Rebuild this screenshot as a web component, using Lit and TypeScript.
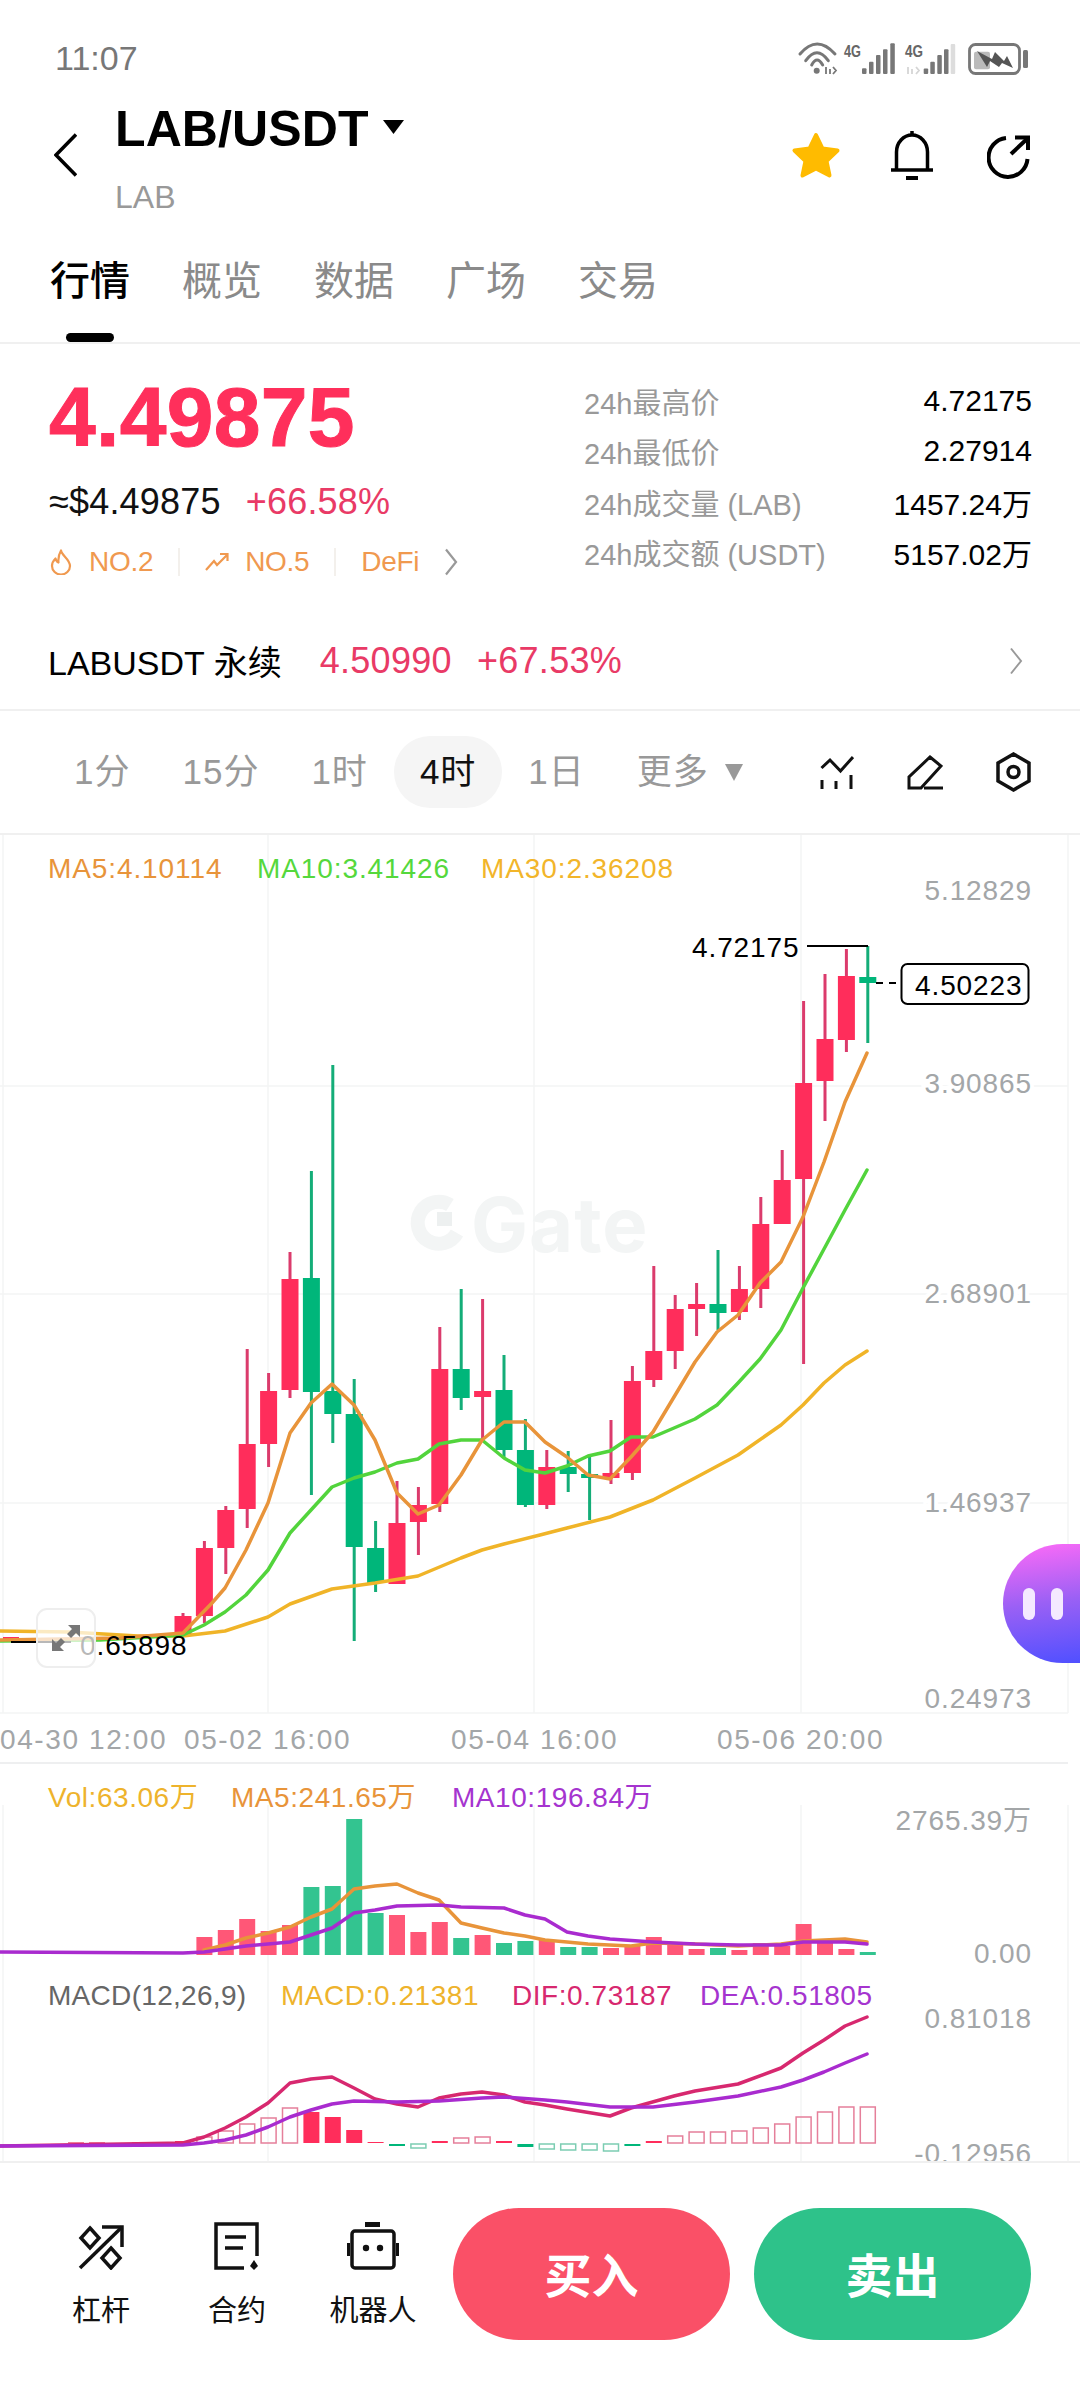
import { LitElement, html, css, svg } from "lit";
import { customElement } from "lit/decorators.js";

type Pt = [number, number];
const RED = "#FF2D5B", GREEN = "#00B67A", WRED = "#DB3B6C", WGREEN = "#14AD78";
const xAt = (i: number) => 183 + 21.4 * i;

// up(1)/down(0), wickTop, bodyTop, bodyBottom, wickBottom
const CANDLES: number[][] = [
  [1,1613,1616,1635,1635],[1,1541,1548,1616,1623],[1,1506,1510,1548,1574],[1,1349,1444,1509,1528],
  [1,1373,1391,1444,1467],[1,1252,1279,1390,1398],[0,1171,1278,1392,1495],[0,1065,1391,1414,1443],
  [0,1379,1414,1547,1641],[0,1521,1548,1583,1592],[1,1481,1523,1584,1584],[1,1487,1505,1522,1555],
  [1,1327,1369,1504,1512],[0,1289,1369,1398,1410],[1,1299,1391,1397,1440],[0,1355,1390,1450,1457],
  [0,1419,1450,1505,1507],[1,1450,1467,1505,1509],[0,1451,1467,1474,1492],[0,1457,1474,1478,1520],
  [1,1420,1473,1478,1484],[1,1366,1381,1473,1480],[1,1266,1351,1380,1387],[1,1295,1309,1351,1369],
  [1,1283,1304,1309,1336],[0,1250,1304,1313,1330],[1,1266,1289,1312,1320],[1,1197,1224,1289,1308],
  [1,1150,1180,1224,1224],[1,1001,1083,1179,1364],[1,974,1039,1081,1121],[1,949,976,1040,1052],
  [0,946,977,983,1043],
];

const MA5: Pt[] = [[0,1640],[120,1638],[183,1633],[212,1603],[225,1588],[246,1550],[268,1503],[290,1433],[311,1403],[332,1384],[354,1405],[375,1440],[397,1493],[418,1514],[439,1505],[461,1475],[482,1440],[504,1422],[525,1422],[545,1442],[567,1457],[588,1475],[610,1479],[631,1457],[653,1432],[674,1397],[695,1362],[717,1332],[738,1315],[760,1283],[781,1262],[803,1217],[824,1162],[845,1102],[867,1053]];
const MA10: Pt[] = [[0,1641],[100,1640],[183,1635],[204,1625],[225,1612],[246,1595],[268,1570],[290,1533],[311,1510],[332,1487],[354,1478],[375,1472],[397,1463],[418,1459],[439,1444],[461,1440],[482,1440],[504,1458],[525,1470],[545,1473],[567,1466],[588,1456],[610,1451],[631,1437],[653,1437],[674,1428],[695,1419],[717,1405],[738,1383],[760,1359],[781,1330],[803,1288],[824,1249],[845,1210],[867,1170]];
const MA30: Pt[] = [[0,1631],[69,1632],[138,1636],[183,1636],[225,1631],[268,1617],[290,1604],[332,1589],[375,1583],[418,1576],[461,1558],[482,1550],[504,1544],[540,1535],[567,1528],[610,1517],[653,1500],[695,1478],[738,1455],[781,1425],[803,1405],[824,1383],[845,1365],[867,1351]];

// up(1)/down(0), top
const VOL: number[][] = [[1,1937],[1,1930],[1,1919],[1,1931],[1,1925],[0,1887],[0,1886],[0,1819],[0,1913],[1,1915],[1,1932],[1,1922],[0,1938],[1,1935],[0,1943],[0,1941],[1,1940],[0,1947],[0,1947],[1,1948],[1,1946],[1,1937],[1,1945],[1,1949],[0,1948],[1,1950],[1,1943],[1,1946],[1,1924],[1,1943],[1,1949],[0,1952]];
const VOL_MA5: Pt[] = [[204,1950],[225,1945],[246,1938],[268,1933],[290,1927],[311,1917],[332,1909],[354,1889],[375,1886],[397,1884],[418,1893],[439,1900],[461,1923],[482,1928],[504,1933],[525,1936],[545,1940],[567,1942],[588,1944],[631,1946],[653,1943],[695,1944],[738,1946],[781,1944],[803,1941],[845,1939],[867,1942]];
const VOL_MA10: Pt[] = [[0,1952],[183,1953],[204,1952],[225,1949],[246,1946],[268,1944],[290,1942],[311,1935],[332,1928],[354,1913],[375,1910],[397,1906],[439,1905],[461,1907],[504,1908],[525,1915],[545,1919],[567,1932],[588,1936],[610,1939],[653,1942],[695,1944],[738,1945],[781,1945],[803,1942],[845,1942],[867,1944]];

// index, top, bottom, colour (r/g), solid(1)/hollow(0)
const HIST: [number, number, number, string, number][] = [
  [0,2141,2143,"r",1],[1,2137,2143,"r",0],[2,2131,2143,"r",0],[3,2124,2143,"r",0],[4,2118,2143,"r",0],[5,2108,2143,"r",0],
  [6,2112,2143,"r",1],[7,2117,2143,"r",1],[8,2130,2143,"r",1],[9,2142,2143,"r",1],[10,2144,2146,"g",1],[11,2144,2148,"g",0],
  [12,2141,2143,"r",1],[13,2138,2143,"r",0],[14,2137,2143,"r",0],[15,2141,2143,"r",1],[16,2144,2147,"g",1],[17,2144,2149,"g",0],
  [18,2144,2150,"g",0],[19,2144,2150,"g",0],[20,2144,2151,"g",0],[21,2144,2146,"g",1],[22,2141,2143,"r",1],[23,2136,2143,"r",0],
  [24,2132,2143,"r",0],[25,2132,2143,"r",0],[26,2131,2143,"r",0],[27,2128,2143,"r",0],[28,2124,2143,"r",0],[29,2117,2143,"r",0],
  [30,2112,2143,"r",0],[31,2107,2143,"r",0],[32,2107,2143,"r",0],
];
const DIF: Pt[] = [[0,2146],[183,2143],[204,2137],[225,2128],[246,2117],[268,2103],[290,2083],[311,2079],[332,2077],[354,2088],[375,2099],[397,2104],[418,2107],[439,2098],[461,2094],[482,2092],[504,2095],[525,2102],[545,2105],[567,2109],[610,2116],[631,2108],[674,2096],[695,2091],[738,2084],[781,2068],[803,2053],[824,2040],[845,2026],[867,2017]];
const DEA: Pt[] = [[0,2146],[183,2145],[204,2143],[225,2140],[246,2135],[268,2127],[290,2117],[311,2110],[332,2104],[354,2101],[397,2102],[439,2101],[482,2098],[504,2097],[545,2100],[567,2102],[610,2107],[653,2107],[695,2102],[738,2096],[781,2087],[803,2080],[824,2072],[845,2063],[867,2054]];

const pts = (p: Pt[]) => p.map((q) => q.join(",")).join(" ");

@customElement("app-root")
export class AppRoot extends LitElement {
  static styles = css`
    :host { display: block; width: 1080px; height: 2388px; background: #fff; overflow: hidden; position: relative;
      font-family: "Liberation Sans", "Noto Sans CJK SC", sans-serif; color: #111; }
    svg { display: block; flex: none; }
    .status { height: 84px; box-sizing: border-box; padding: 32px 50px 0 55px; display: flex; align-items: center; justify-content: space-between; }
    .time { font-size: 34px; color: #777; line-height: 52px; }
    .status svg { overflow: visible; }
    .header { height: 136px; box-sizing: border-box; display: flex; align-items: flex-start; padding: 20px 50px 0 54px; }
    .back { margin-top: 29px; margin-right: 38px; }
    .titles { flex: 1; }
    .title-row { display: flex; align-items: center; height: 50px; }
    .title { font-size: 50px; font-weight: 700; line-height: 50px; color: #000; letter-spacing: .1px; }
    .caret { margin-left: 14px; margin-top: -4px; }
    .sub { margin-top: 25px; font-size: 32px; line-height: 36px; color: #999; }
    .actions { display: flex; align-items: flex-start; margin-top: 27px; }
    .star { margin-right: 50px; }
    .bell { margin-right: 54px; }
    .share { margin-top: 4px; }
    .tabs { height: 124px; box-sizing: border-box; border-bottom: 2px solid #F0F0F0; display: flex; gap: 52px; padding: 41px 0 0 50px; }
    .tab { display: flex; flex-direction: column; align-items: center; font-size: 40px; line-height: 40px; color: #8A8A8A; }
    .tab.on { color: #000; font-weight: 500; }
    .tab i { width: 48px; height: 9px; border-radius: 5px; background: #000; margin-top: 32px; }
    .summary { height: 270px; display: flex; justify-content: space-between; padding: 31px 48px 0 49px; box-sizing: border-box; }
    .price { font-size: 84px; line-height: 84px; font-weight: 700; color: #FF2F5B; -webkit-text-stroke: 1px #FF2F5B; letter-spacing: .3px; }
    .fiat { display: flex; gap: 25px; font-size: 36px; line-height: 40px; margin-top: 23px; letter-spacing: .2px; }
    .fiat b { font-weight: 400; color: #E93A66; }
    .tags { display: flex; align-items: center; margin-top: 24px; font-size: 28px; line-height: 32px; color: #F0994F; letter-spacing: -.3px; }
    .tag-text { margin-left: 16px; }
    .tag-div { width: 2px; height: 28px; background: #F3F0EC; margin: 0 25px; }
    .tags svg.more { margin-left: 25px; }
    .stats { width: 448px; margin-top: 1px; }
    .stat { height: 50.33px; display: flex; align-items: center; justify-content: space-between; font-size: 30px; color: #000; }
    .stat span { color: #999; font-size: 29px; }
    .perp { height: 97px; box-sizing: border-box; border-bottom: 2px solid #F0F0F0; display: flex; align-items: center; padding: 0 57px 2px 48px; }
    .perp-name { font-size: 34px; color: #000; margin-right: 38px; }
    .perp-num { font-size: 36px; color: #E93A66; margin-right: 25px; letter-spacing: .3px; }
    .perp svg { margin-left: auto; }
    .periods { height: 124px; box-sizing: border-box; border-bottom: 2px solid #F0F0F0; display: flex; align-items: center; padding: 0 49px 0 48px; font-size: 35px; color: #999; letter-spacing: 1px; }
    .period { padding: 0 26px; height: 72px; line-height: 72px; border-radius: 36px; white-space: nowrap; display: flex; align-items: center; }
    .period.on { background: #F5F5F5; color: #111; }
    .period svg { margin-left: 16px; }
    .tools { display: flex; gap: 53px; margin-left: auto; align-items: center; }
    .chart { position: relative; height: 1326px; overflow: hidden; }
    .chart text { font-family: "Liberation Sans", "Noto Sans CJK SC", sans-serif; font-size: 28px; letter-spacing: .9px; dominant-baseline: central; }
    .chart text.tight { letter-spacing: .55px; }
    .chart text.paren { letter-spacing: .3px; }
    .axis { fill: #A3A6A8; paint-order: stroke; stroke: #fff; stroke-width: 8px; }
    .chart text.date { fill: #A3A6A8; letter-spacing: 1.6px; }
    .mark { fill: #000; }
    .chart text.wm { font-family: Inter, "Liberation Sans", sans-serif; font-weight: 700; font-size: 76px; fill: #F3F5F5; letter-spacing: 1px; }
    .float { position: absolute; right: 0; top: 709px; width: 77px; height: 119px; border-radius: 60px 0 0 60px;
      background: linear-gradient(172deg, #FF6BF7 0%, #9A60F5 50%, #5050FF 100%); display: flex; gap: 16px; align-items: center; padding-left: 20px; box-sizing: border-box; }
    .float i { width: 12px; height: 32px; border-radius: 6px; background: #F4E9FF; }
    .bottom { height: 227px; box-sizing: border-box; border-top: 2px solid #F0F0F0; display: flex; align-items: flex-start; padding: 45px 48px 0 33px; }
    .act { width: 136px; display: flex; flex-direction: column; align-items: center; font-size: 29px; color: #111; }
    .act div { height: 62px; display: flex; align-items: flex-end; }
    .act span { margin-top: 26px; line-height: 30px; white-space: nowrap; }
    .btn { width: 277px; height: 132px; box-sizing: border-box; padding-bottom: 4px; border-radius: 66px; display: flex; align-items: center; justify-content: center; color: #fff; font-size: 47px; font-weight: 700; }
    .buy { background: #FA5067; margin-left: 12px; }
    .sell { background: #2EC28A; margin-left: 24px; }
  `;

  private statusIcons() {
    const c = "#777";
    const bars = (xs: number[], tops: number[], fade: boolean) =>
      xs.map((x, i) => svg`<rect x=${x - 2} y=${tops[i]} width="4.5" height=${33 - tops[i]} rx="1" fill=${fade && i === 4 ? "#DDD" : c}></rect>`);
    return html`<svg width="232" height="34" viewBox="0 0 232 34">
      <g fill="none" stroke=${c} stroke-width="3" stroke-linecap="round">
        <path d="M2 13Q19 -7 37 13"></path><path d="M7.7 19.7Q19 3.7 30.3 19.7"></path><path d="M13.7 24Q19 14 24.7 24"></path>
      </g>
      <circle cx="18.7" cy="29.7" r="3" fill=${c}></circle>
      <path d="M28 26V33M32 28V33M35 26L38 29.500L35 33" fill="none" stroke=${c} stroke-width="1.800"></path>
      <text x="46" y="16" font-family="Liberation Sans" font-size="17" font-weight="700" fill="#666" textLength="17" lengthAdjust="spacingAndGlyphs">4G</text>
      ${bars([66, 73, 80, 87, 94.3], [27.3, 20.7, 14, 8.3, 2.3], false)}
      <text x="107" y="16" font-family="Liberation Sans" font-size="17" font-weight="700" fill="#666" textLength="18" lengthAdjust="spacingAndGlyphs">4G</text>
      <path d="M110 26V33M114 28V33M118 26L121 29.500L118 33" fill="none" stroke="#D5D5D5" stroke-width="1.800"></path>
      ${bars([127.7, 134.3, 141.3, 148, 154.7], [27.5, 20.7, 14, 8.3, 3], true)}
      <rect x="171.500" y="3.500" width="50" height="29" rx="6" fill="none" stroke=${c} stroke-width="2.800"></rect>
      <rect x="176" y="10.700" width="16" height="17.600" rx="2" fill="#BBB"></rect>
      <path d="M179 10L194 18L197 11L206 20L209 15L215 27L204 22L201 26L192 20L189 26Z" fill="#555"></path>
      <rect x="225" y="9" width="5" height="18" rx="1.500" fill=${c}></rect>
    </svg>`;
  }

  private chart() {
    const V = [268, 534, 801, 1068, 3];
    const H = [1086, 1294, 1503];
    const label = (t: string, x: number, y: number, c: string, cls = "") =>
      svg`<text class=${cls} x=${x} y=${y} fill=${c}>${t}</text>`;
    const axis = (t: string, y: number) =>
      svg`<text class="axis" x="1032" y=${y} text-anchor="end">${t}</text>`;
    const line = (p: Pt[], c: string, w = 3.5) =>
      svg`<polyline points=${pts(p)} fill="none" stroke=${c} stroke-width=${w} stroke-linejoin="round" stroke-linecap="round"></polyline>`;
    return html`<svg width="1080" height="1326" viewBox="0 835 1080 1326">
      <g stroke="#F3F4F5" stroke-width="1.500">
        ${V.map((x) => svg`<line x1=${x} x2=${x} y1="835" y2="1713"></line><line x1=${x} x2=${x} y1="1805" y2="2161"></line>`)}
        ${H.map((y) => svg`<line x1="0" x2="1068" y1=${y} y2=${y}></line>`)}
        <line x1="0" x2="1068" y1="1713" y2="1713"></line>
      </g>
      <line x1="0" x2="1068" y1="1763" y2="1763" stroke="#EEEFF0" stroke-width="2"></line>

      <path d="M450 1205A21 21 0 1 0 457 1233" fill="none" stroke="#F3F5F5" stroke-width="14"></path>
      <rect x="437" y="1212" width="15" height="14" fill="#EDF0F0"></rect>
      <text class="wm" x="471" y="1224">Gate</text>

      ${label("MA5:4.10114", 48, 868, "#E8943A")}
      ${label("MA10:3.41426", 257, 868, "#55D83C")}
      ${label("MA30:2.36208", 481, 868, "#F2B52A")}
      ${axis("5.12829", 890)}${axis("3.90865", 1083)}${axis("2.68901", 1293)}${axis("1.46937", 1502)}${axis("0.24973", 1698)}

      <rect x="3" y="1637" width="16" height="3" fill=${RED}></rect>
      <rect x="29" y="1638" width="12" height="3" fill=${GREEN}></rect>
      ${CANDLES.map((c, i) => {
        const x = xAt(i);
        return svg`<rect x=${x - 1.5} y=${c[1]} width="3" height=${c[4] - c[1]} fill=${c[0] ? WRED : WGREEN}></rect>
          <rect x=${x - 8.5} y=${c[2]} width="17" height=${c[3] - c[2]} fill=${c[0] ? RED : GREEN}></rect>`;
      })}
      ${line(MA30, "#F0B428")}${line(MA10, "#52D43C")}${line(MA5, "#E8943A")}

      <text class="mark" x="692" y="947">4.72175</text>
      <path d="M807 946H868" stroke="#000" stroke-width="2" fill="none"></path>
      <path d="M876 983H900" stroke="#000" stroke-width="2" stroke-dasharray="7 6" fill="none"></path>
      <rect x="901.500" y="964" width="127" height="40" rx="6" fill="#fff" stroke="#000" stroke-width="2"></rect>
      <text class="mark" x="915" y="985">4.50223</text>

      <path d="M11 1642H71" stroke="#000" stroke-width="2"></path>
      <text class="mark" x="80" y="1645">0.65898</text>
      <rect x="37" y="1609" width="58" height="58" rx="10" fill="#fff" fill-opacity=".72" stroke="#EEE" stroke-width="2"></rect>
      <path d="M68 1625H80V1637L76 1633L71 1638L67 1634L72 1629Z M52 1651V1639L56 1643L61 1638L65 1642L60 1647L64 1651Z" fill="#777"></path>

      <text class="date" x="0" y="1739">04-30 12:00</text>
      <text class="date" x="184" y="1739">05-02 16:00</text>
      <text class="date" x="451" y="1739">05-04 16:00</text>
      <text class="date" x="717" y="1739">05-06 20:00</text>

      ${label("Vol:63.06万", 48, 1797, "#EEB32C", "tight")}
      ${label("MA5:241.65万", 231, 1797, "#E8943A", "tight")}
      ${label("MA10:196.84万", 452, 1797, "#A534CF", "tight")}
      ${axis("2765.39万", 1820)}${axis("0.00", 1953)}
      ${VOL.map((v, i) => svg`<rect x=${xAt(i + 1) - 8} y=${v[1]} width="16" height=${1955 - v[1]} fill=${v[0] ? "#FF5777" : "#33C490"}></rect>`)}
      ${line(VOL_MA5, "#E8943A")}${line(VOL_MA10, "#A92BCF")}

      ${label("MACD(12,26,9)", 48, 1995, "#666", "paren")}
      ${label("MACD:0.21381", 281, 1995, "#EEB32C", "tight")}
      ${label("DIF:0.73187", 512, 1995, "#D7286F", "tight")}
      ${label("DEA:0.51805", 700, 1995, "#A534CF", "tight")}
      ${axis("0.81018", 2018)}${axis("-0.12956", 2153)}
      ${[76, 97, 140, 161].map((x) => svg`<rect x=${x - 8} y="2142" width="16" height="1.500" fill="#F27C98"></rect>`)}
      ${HIST.map((h) => {
        const x = xAt(h[0]);
        const col = h[3] === "r" ? (h[4] ? RED : "#E57F9A") : h[4] ? GREEN : "#7CCDB2";
        return h[4]
          ? svg`<rect x=${x - 8} y=${h[1]} width="16" height=${h[2] - h[1]} fill=${col}></rect>`
          : svg`<rect x=${x - 7.5} y=${h[1]} width="15" height=${h[2] - h[1]} fill="none" stroke=${col} stroke-width="1.500"></rect>`;
      })}
      ${line(DIF, "#D7286F")}${line(DEA, "#A92BCF")}
    </svg>`;
  }

  render() {
    return html`
      <div class="status"><span class="time">11:07</span>${this.statusIcons()}</div>

      <div class="header">
        <svg class="back" width="23" height="44" viewBox="0 0 23 44"><path d="M22 1.500L2 22L22 42.500" fill="none" stroke="#000" stroke-width="3.500"></path></svg>
        <div class="titles">
          <div class="title-row"><span class="title">LAB/USDT</span>
            <svg class="caret" width="21" height="14" viewBox="0 0 21 14"><path d="M0 0H21L10.500 14Z" fill="#000"></path></svg></div>
          <div class="sub">LAB</div>
        </div>
        <div class="actions">
          <svg class="star" width="50" height="48" viewBox="0 0 50 48"><path d="M25 4L31.500 17.500L46.500 19.500L35.500 30L38.500 44.500L25 37.500L11.500 44.500L14.500 30L3.500 19.500L18.500 17.500Z" fill="#FFBB00" stroke="#FFBB00" stroke-width="4" stroke-linejoin="round"></path></svg>
          <svg class="bell" width="42" height="49" viewBox="0 0 42 49"><g fill="none" stroke="#000" stroke-width="3.500"><path d="M21 0V4"></path><path d="M5.500 39V21A15.500 17 0 0 1 36.500 21V39"></path><path d="M0 39H42"></path></g><rect x="15" y="45" width="12" height="4" fill="#000"></rect></svg>
          <svg class="share" width="43" height="44" viewBox="0 0 43 44"><g fill="none" stroke="#000" stroke-width="4"><path d="M19 3A19.500 19.500 0 1 0 40.500 24"></path><path d="M24 19L41 3"></path><path d="M28 2.500H41V15"></path></g></svg>
        </div>
      </div>

      <div class="tabs">
        <div class="tab on">行情<i></i></div>
        <div class="tab">概览</div><div class="tab">数据</div><div class="tab">广场</div><div class="tab">交易</div>
      </div>

      <div class="summary">
        <div>
          <div class="price">4.49875</div>
          <div class="fiat"><span>≈$4.49875</span><b>+66.58%</b></div>
          <div class="tags">
            <svg width="24" height="26" viewBox="0 0 24 26"><path d="M12 1.500C13 7 21 10 21 17A9 8.500 0 0 1 3 17C3 13.500 5 11 6.500 9.500C7 11.500 8 13 9.500 13.500C9 9 10 5 12 1.500Z" fill="none" stroke="#F0994F" stroke-width="2.200" stroke-linejoin="round"></path></svg>
            <span class="tag-text">NO.2</span>
            <span class="tag-div"></span>
            <svg width="24" height="20" viewBox="0 0 24 20"><path d="M1 18L9 9L12 13L22 3M15 2H22.500V9" fill="none" stroke="#F0994F" stroke-width="2.200"></path></svg>
            <span class="tag-text">NO.5</span>
            <span class="tag-div"></span>
            <span>DeFi</span>
            <svg class="more" width="14" height="28" viewBox="0 0 14 28"><path d="M2 1.500L12 14L2 26.500" fill="none" stroke="#999" stroke-width="2.200"></path></svg>
          </div>
        </div>
        <div class="stats">
          <div class="stat"><span>24h最高价</span>4.72175</div>
          <div class="stat"><span>24h最低价</span>2.27914</div>
          <div class="stat"><span>24h成交量 (LAB)</span>1457.24万</div>
          <div class="stat"><span>24h成交额 (USDT)</span>5157.02万</div>
        </div>
      </div>

      <div class="perp">
        <span class="perp-name">LABUSDT 永续</span>
        <span class="perp-num">4.50990</span>
        <span class="perp-num">+67.53%</span>
        <svg width="14" height="28" viewBox="0 0 14 28"><path d="M2 1.500L12 14L2 26.500" fill="none" stroke="#999" stroke-width="2"></path></svg>
      </div>

      <div class="periods">
        <div class="period">1分</div><div class="period">15分</div><div class="period">1时</div>
        <div class="period on">4时</div><div class="period">1日</div>
        <div class="period">更多<svg width="18" height="17" viewBox="0 0 18 17"><path d="M0 0H18L9 17Z" fill="#999"></path></svg></div>
        <div class="tools">
          <svg width="34" height="33" viewBox="0 0 34 33"><g fill="none" stroke="#111" stroke-width="3"><path d="M1.500 12L10 4L20.500 15L33 1"></path><path d="M2 24V33M16 25V33M31 19V33"></path></g></svg>
          <svg width="36" height="35" viewBox="0 0 36 35"><g fill="none" stroke="#111" stroke-width="3"><path d="M23 2L34 11L14 33H2V22Z"></path><path d="M17 33H36"></path></g></svg>
          <svg width="35" height="40" viewBox="0 0 35 40"><path d="M17.500 2L33 11V29L17.500 38L2 29V11Z" fill="none" stroke="#111" stroke-width="3.500"></path><circle cx="17.500" cy="20" r="5.500" fill="none" stroke="#111" stroke-width="3.500"></circle></svg>
        </div>
      </div>

      <div class="chart">
        ${this.chart()}
        <div class="float"><i></i><i></i></div>
      </div>

      <div class="bottom">
        <div class="act"><div>
          <svg width="46" height="46" viewBox="0 0 46 46"><g fill="none" stroke="#111" stroke-width="3.500"><path d="M2 44L44 3"></path><path d="M24 3H44V23"></path><path d="M12 4L21 14L12 24L3 14Z"></path><path d="M33 24L42 34L33 44L24 34Z"></path></g></svg>
        </div><span>杠杆</span></div>
        <div class="act"><div>
          <svg width="46" height="48" viewBox="0 0 46 48"><g fill="none" stroke="#111" stroke-width="3.500"><path d="M43 34V2H2V46H30"></path><path d="M11 15H32M11 26H29"></path></g><path d="M40 38L44 44L40 48L36 44Z" fill="#111"></path></svg>
        </div><span>合约</span></div>
        <div class="act"><div>
          <svg width="52" height="48" viewBox="0 0 52 48"><rect x="18" y="0" width="15" height="5" fill="#111"></rect><rect x="5" y="9" width="42" height="37" rx="3" fill="none" stroke="#111" stroke-width="3.500"></rect><rect x="0" y="21" width="3" height="13" fill="#111"></rect><rect x="49" y="21" width="3" height="13" fill="#111"></rect><circle cx="19" cy="26" r="3.200" fill="#111"></circle><circle cx="33" cy="26" r="3.200" fill="#111"></circle></svg>
        </div><span>机器人</span></div>
        <div class="btn buy">买入</div>
        <div class="btn sell">卖出</div>
      </div>
    `;
  }
}
